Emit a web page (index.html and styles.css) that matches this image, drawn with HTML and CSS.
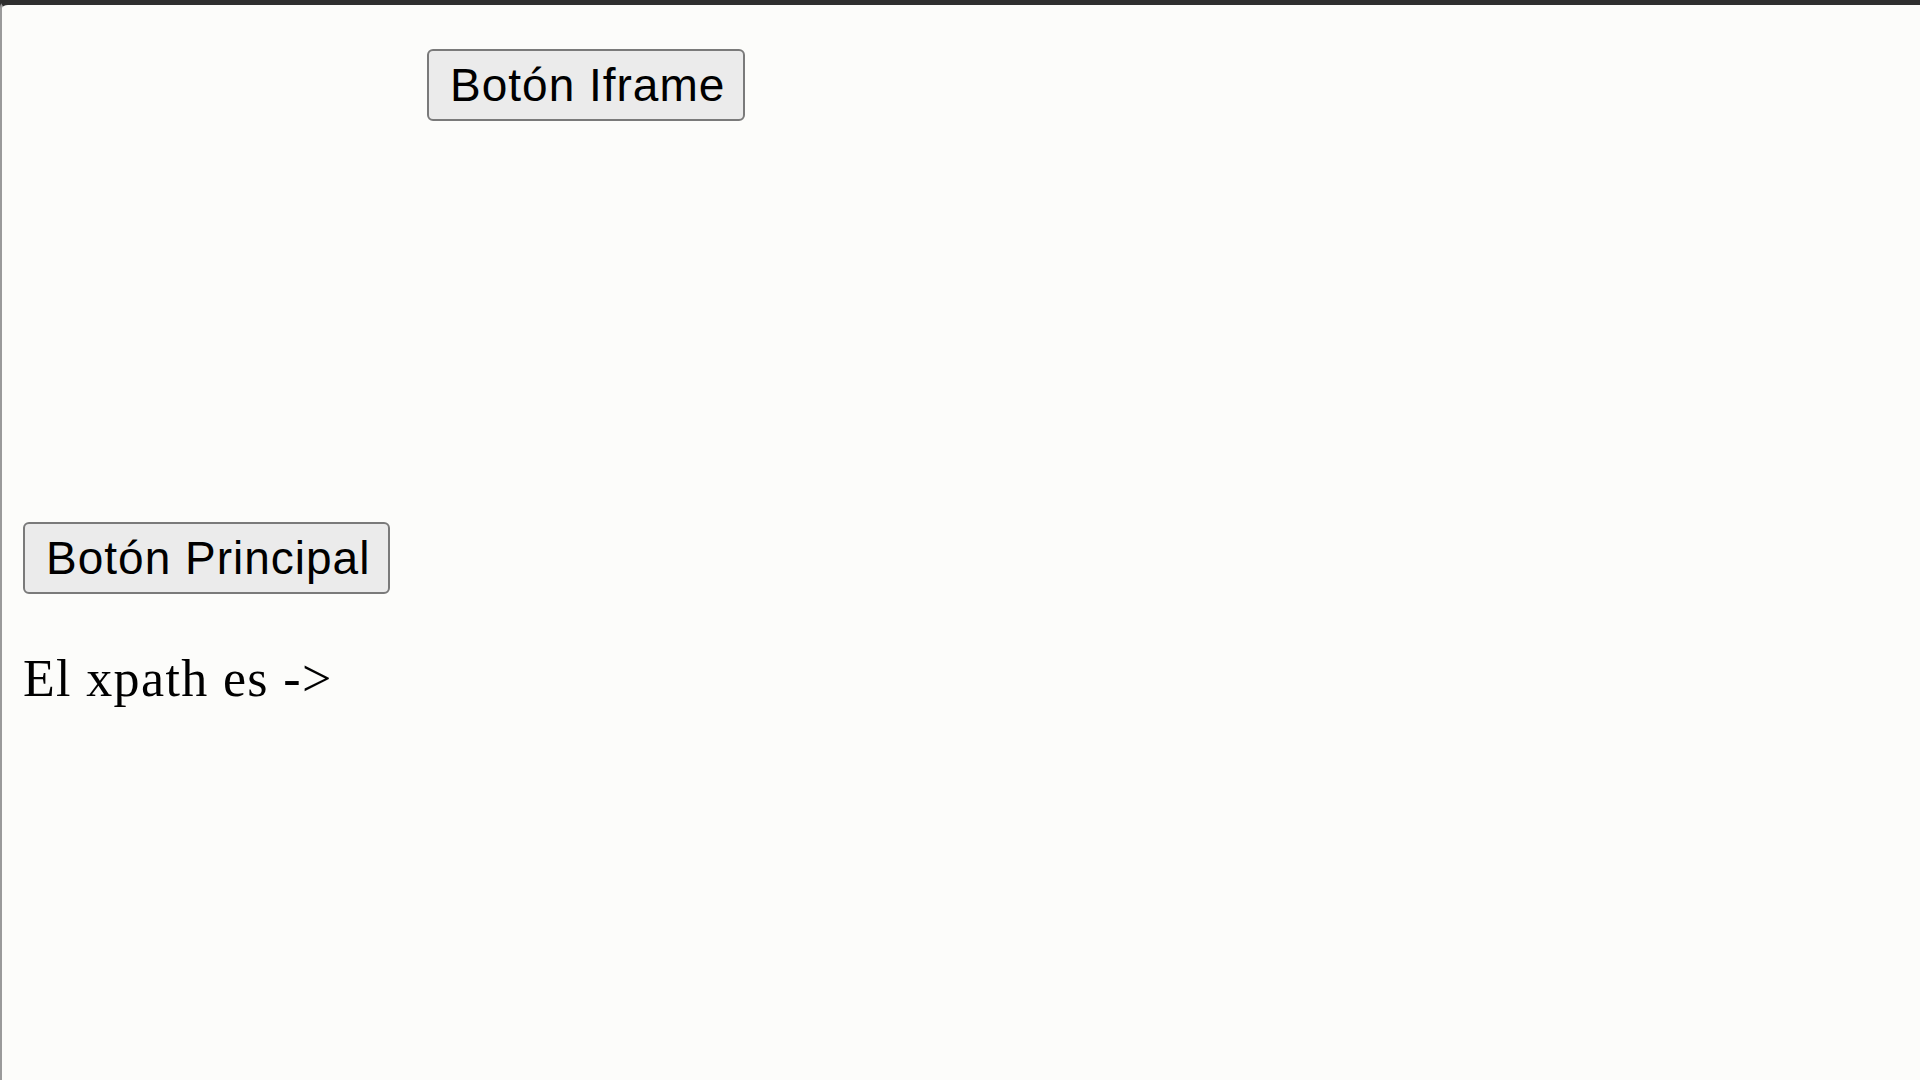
FILE: index.html
```html
<!DOCTYPE html>
<html lang="es">
<head>
<meta charset="utf-8">
<title>Xpath</title>
<link rel="stylesheet" href="styles.css">
</head>
<body>
<div class="window">
  <div class="frame">
    <button class="btn" type="button">Botón Iframe</button>
  </div>
  <main class="content">
    <button class="btn" type="button">Botón Principal</button>
    <p class="xpath">El xpath es -&gt;</p>
  </main>
</div>
</body>
</html>
```
FILE: styles.css
```css
html, body {
  margin: 0;
  padding: 0;
  background: #2f2f2f;
}
.window {
  box-sizing: border-box;
  min-height: 100vh;
  border-top: 5px solid #2f2f2f;
  border-left: 2px solid #9a9a9a;
  border-top-left-radius: 8px;
  background: #fcfcfa;
}
.frame {
  box-sizing: border-box;
  height: 517px;
  padding: 44px 0 0 425px;
}
.content {
  padding: 0 21px;
}
.btn {
  margin: 0;
  font-family: "Liberation Sans", Arial, sans-serif;
  font-size: 46px;
  letter-spacing: 1px;
  line-height: 52px;
  color: #000;
  background: #ebebeb;
  border: 2px solid #7a7a7a;
  border-radius: 6px;
  padding: 8px 18px 8px 21px;
}
.xpath {
  margin: 55px 0 0;
  font-family: "Liberation Serif", "Times New Roman", serif;
  font-size: 52px;
  letter-spacing: 1.35px;
  color: #000;
}
```
